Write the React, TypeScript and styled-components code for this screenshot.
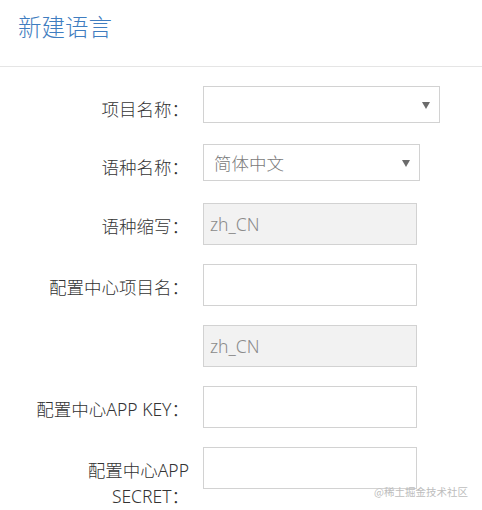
import React from "react";
import styled, { createGlobalStyle } from "styled-components";

const Global = createGlobalStyle`
  html, body { margin: 0; padding: 0; background: #fff; overflow: hidden; }
  body { font-family: "Noto Sans", "Noto Sans CJK SC", sans-serif; }
  * { box-sizing: border-box; }
`;

const Page = styled.div`
  position: relative;
  width: 482px;
  height: 510px;
  background: #fff;
`;

const Header = styled.header`
  height: 67px;
  padding: 10px 18px 0;
  border-bottom: 1px solid #e5e5e5;
`;

const Title = styled.h1`
  margin: 0;
  font-family: "Noto Sans CJK SC", sans-serif;
  font-weight: 300;
  font-size: 23.5px;
  line-height: 32px;
  color: #3f7dc0;
`;

const Form = styled.form`
  display: flex;
  flex-direction: column;
  padding: 19px 0 0 29px;
`;

const Row = styled.div<{ $space: number }>`
  display: grid;
  grid-template-columns: 160px auto;
  column-gap: 14px;
  align-items: start;
  margin-bottom: ${(p) => p.$space}px;
`;

const Label = styled.label`
  padding-top: 10px;
  text-align: right;
  font-family: "Noto Sans", "Noto Sans CJK SC", sans-serif;
  font-weight: 300;
  font-size: 17.5px;
  line-height: 26px;
  color: #333;
  white-space: normal;
`;

const SelectBox = styled.div<{ $width: number }>`
  position: relative;
  display: flex;
  align-items: center;
  width: ${(p) => p.$width}px;
  height: 37px;
  padding: 0 24px 0 10px;
  border: 1px solid #d2d2d2;
  background: #fff;
  font-family: "Noto Sans CJK SC", sans-serif;
  font-weight: 300;
  font-size: 17.5px;
  color: #7a7a7a;
`;

const Arrow = styled.span`
  position: absolute;
  right: 9px;
  top: 50%;
  margin-top: -3px;
  width: 0;
  height: 0;
  border-left: 4px solid transparent;
  border-right: 4px solid transparent;
  border-top: 7px solid #6b6b6b;
`;

const TextInput = styled.input<{ $width: number }>`
  display: block;
  width: ${(p) => p.$width}px;
  height: 42px;
  margin: 0;
  padding: 0 6px;
  border: 1px solid #d2d2d2;
  border-radius: 0;
  outline: none;
  background: ${(p) => (p.disabled ? "#f2f2f2" : "#fff")};
  font-family: "Noto Sans", "Noto Sans CJK SC", sans-serif;
  font-weight: 300;
  font-size: 17.5px;
  color: #8a8a8a;
  -webkit-text-fill-color: #8a8a8a;
  opacity: 1;
`;

const Watermark = styled.div`
  position: absolute;
  right: 14px;
  bottom: 11px;
  font-family: "Noto Sans CJK SC", sans-serif;
  font-size: 10.5px;
  line-height: 14px;
  color: #bdbdbd;
`;

export default function App() {
  return (
    <Page>
      <Global />
      <Header>
        <Title>新建语言</Title>
      </Header>
      <Form>
        <Row $space={21}>
          <Label>项目名称：</Label>
          <SelectBox $width={237}>
            <span></span>
            <Arrow />
          </SelectBox>
        </Row>
        <Row $space={22}>
          <Label>语种名称：</Label>
          <SelectBox $width={217}>
            <span>简体中文</span>
            <Arrow />
          </SelectBox>
        </Row>
        <Row $space={19}>
          <Label>语种缩写：</Label>
          <TextInput $width={214} disabled value="zh_CN" readOnly />
        </Row>
        <Row $space={19}>
          <Label>配置中心项目名：</Label>
          <TextInput $width={214} defaultValue="" />
        </Row>
        <Row $space={19}>
          <Label></Label>
          <TextInput $width={214} disabled value="zh_CN" readOnly />
        </Row>
        <Row $space={19}>
          <Label>配置中心APP KEY：</Label>
          <TextInput $width={214} defaultValue="" />
        </Row>
        <Row $space={0}>
          <Label>配置中心APP SECRET：</Label>
          <TextInput $width={214} defaultValue="" />
        </Row>
      </Form>
      <Watermark>@稀土掘金技术社区</Watermark>
    </Page>
  );
}
